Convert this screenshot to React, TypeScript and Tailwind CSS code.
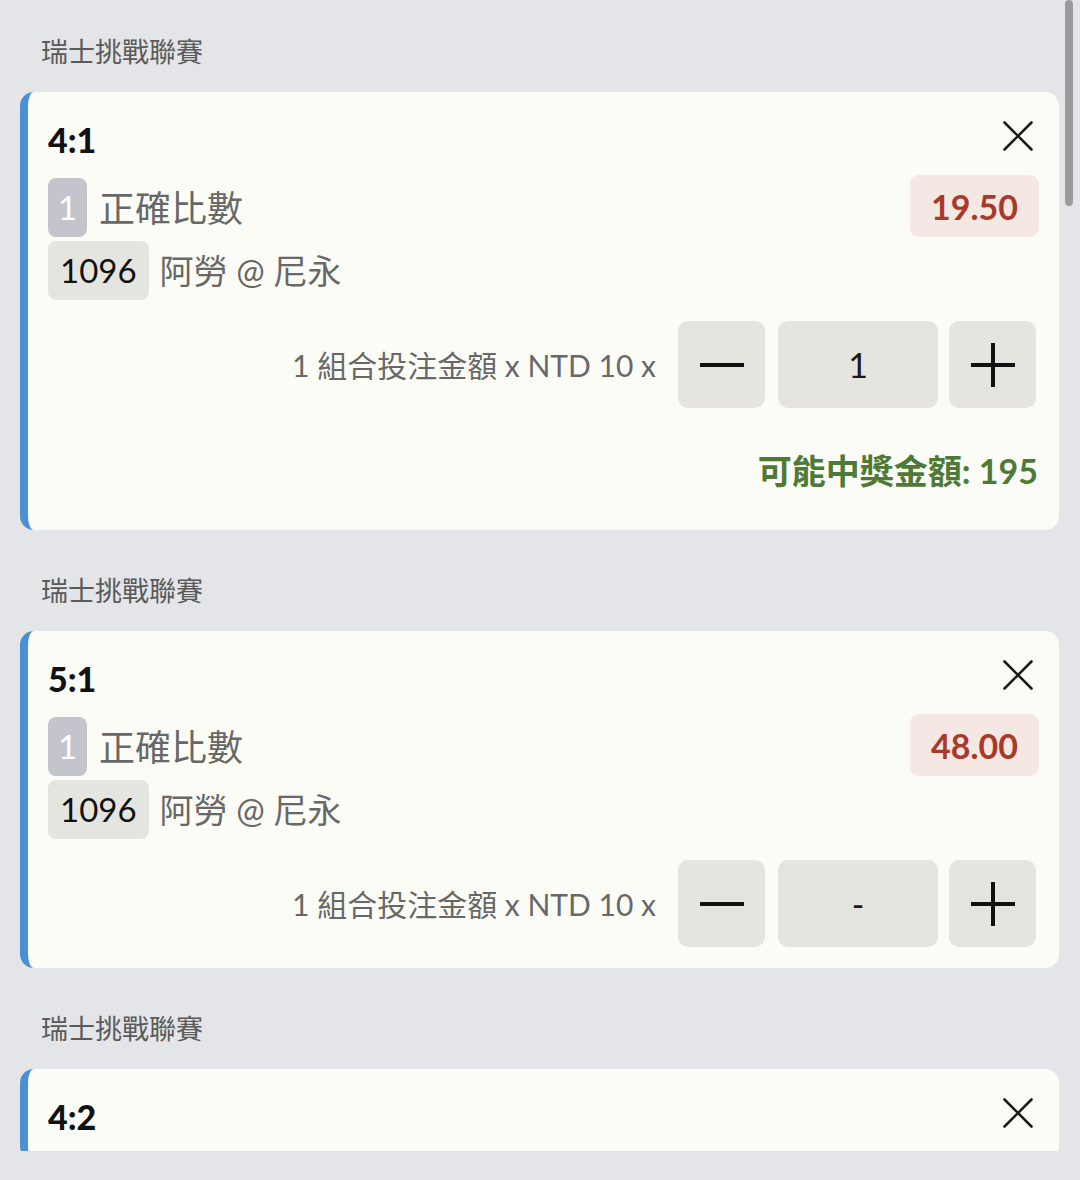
import { Fragment } from "react"

interface Bet {
  score: string
  odds?: string
  amount?: string
  win?: string
}

const BETS: Bet[] = [
  { score: "4:1", odds: "19.50", amount: "1", win: "195" },
  { score: "5:1", odds: "48.00", amount: "-" },
  { score: "4:2" },
]

const CloseIcon = () => (
  <svg width="30" height="30" viewBox="0 0 30 30" fill="none" stroke="#1a1a1a" strokeWidth="2.6" strokeLinecap="round">
    <path d="M1.5 1.5 L28.5 28.5 M28.5 1.5 L1.5 28.5" />
  </svg>
)

const MinusIcon = () => (
  <svg width="44" height="44" viewBox="0 0 44 44" fill="none" stroke="#111" strokeWidth="4">
    <path d="M0 22 H44" />
  </svg>
)

const PlusIcon = () => (
  <svg width="44" height="44" viewBox="0 0 44 44" fill="none" stroke="#111" strokeWidth="4">
    <path d="M0 22 H44 M22 0 V44" />
  </svg>
)

const BetCard = ({ bet }: { bet: Bet }) => (
  <div className="rounded-[14px] border-l-[8px] border-[#4b8fd5] bg-[#fcfcf6] pt-[24px] pr-[20px] pb-[21px] pl-[20px]">
    <div className="flex h-[46px] items-center justify-between">
      <span className="mt-[2px] text-[34px] leading-none font-black text-[#111]">
        {bet.score}
      </span>
      <span className="mr-[6px] -mt-[6px] flex">
        <CloseIcon />
      </span>
    </div>
    {bet.odds !== undefined && (
      <>
        <div className="mt-[13px] flex items-end justify-between">
          <div className="flex items-center gap-[12px]">
            <span className="flex h-[59px] w-[39px] items-center justify-center rounded-[8px] bg-[#c4c4cc] text-[33px] text-white">
              1
            </span>
            <span className="text-[36px] leading-none text-[#686868]">正確比數</span>
          </div>
          <span className="flex h-[62px] items-center rounded-[9px] bg-[#f5e7e1] px-[21px] text-[34px] font-bold text-[#a83a2c]">
            {bet.odds}
          </span>
        </div>
        <div className="mt-[4px] flex items-center gap-[11px]">
          <span className="flex h-[59px] items-center rounded-[8px] bg-[#e5e5e0] px-[12px] text-[33px] text-[#111]">
            1096
          </span>
          <span className="text-[34px] leading-none text-[#686868]">阿勞 @ 尼永</span>
        </div>
        <div className="mt-[21px] mr-[3px] flex items-center justify-end">
          <span className="mr-[22px] text-[30px] leading-none text-[#686868]">
            1 組合投注金額 x NTD 10 x
          </span>
          <button className="flex h-[87px] w-[87px] items-center justify-center rounded-[10px] bg-[#e5e4df]">
            <MinusIcon />
          </button>
          <div className="ml-[13px] flex h-[87px] w-[160px] items-center justify-center rounded-[10px] bg-[#e5e4df] text-[34px] text-[#1a1a1a]">
            {bet.amount}
          </div>
          <button className="ml-[11px] flex h-[87px] w-[87px] items-center justify-center rounded-[10px] bg-[#e5e4df]">
            <PlusIcon />
          </button>
        </div>
        {bet.win !== undefined && (
          <div className="mt-[40px] mb-[17px] mr-[1px] flex h-[44px] items-center justify-end text-[34px] font-bold text-[#4e7a35]">
            可能中獎金額: {bet.win}
          </div>
        )}
      </>
    )}
  </div>
)

export default function App() {
  return (
    <div className="relative h-[1180px] w-[1080px] overflow-hidden bg-[#e4e5e8] font-['Lato','Noto_Sans_CJK_TC',sans-serif]">
      <div className="h-[1151px] overflow-hidden pr-[21px] pl-[20px]">
        {BETS.map((bet, i) => (
          <Fragment key={i}>
            <div
              className={
                i === 0
                  ? "pt-[34px] pb-[22px] pl-[21px] text-[27px] leading-[36px] text-[#5a5a5a]"
                  : "pt-[43px] pb-[22px] pl-[21px] text-[27px] leading-[36px] text-[#5a5a5a]"
              }
            >
              瑞士挑戰聯賽
            </div>
            <BetCard bet={bet} />
          </Fragment>
        ))}
      </div>
      <div className="absolute top-0 right-[7px] h-[206px] w-[8px] rounded-full bg-[#9b9b9b]" />
    </div>
  )
}
